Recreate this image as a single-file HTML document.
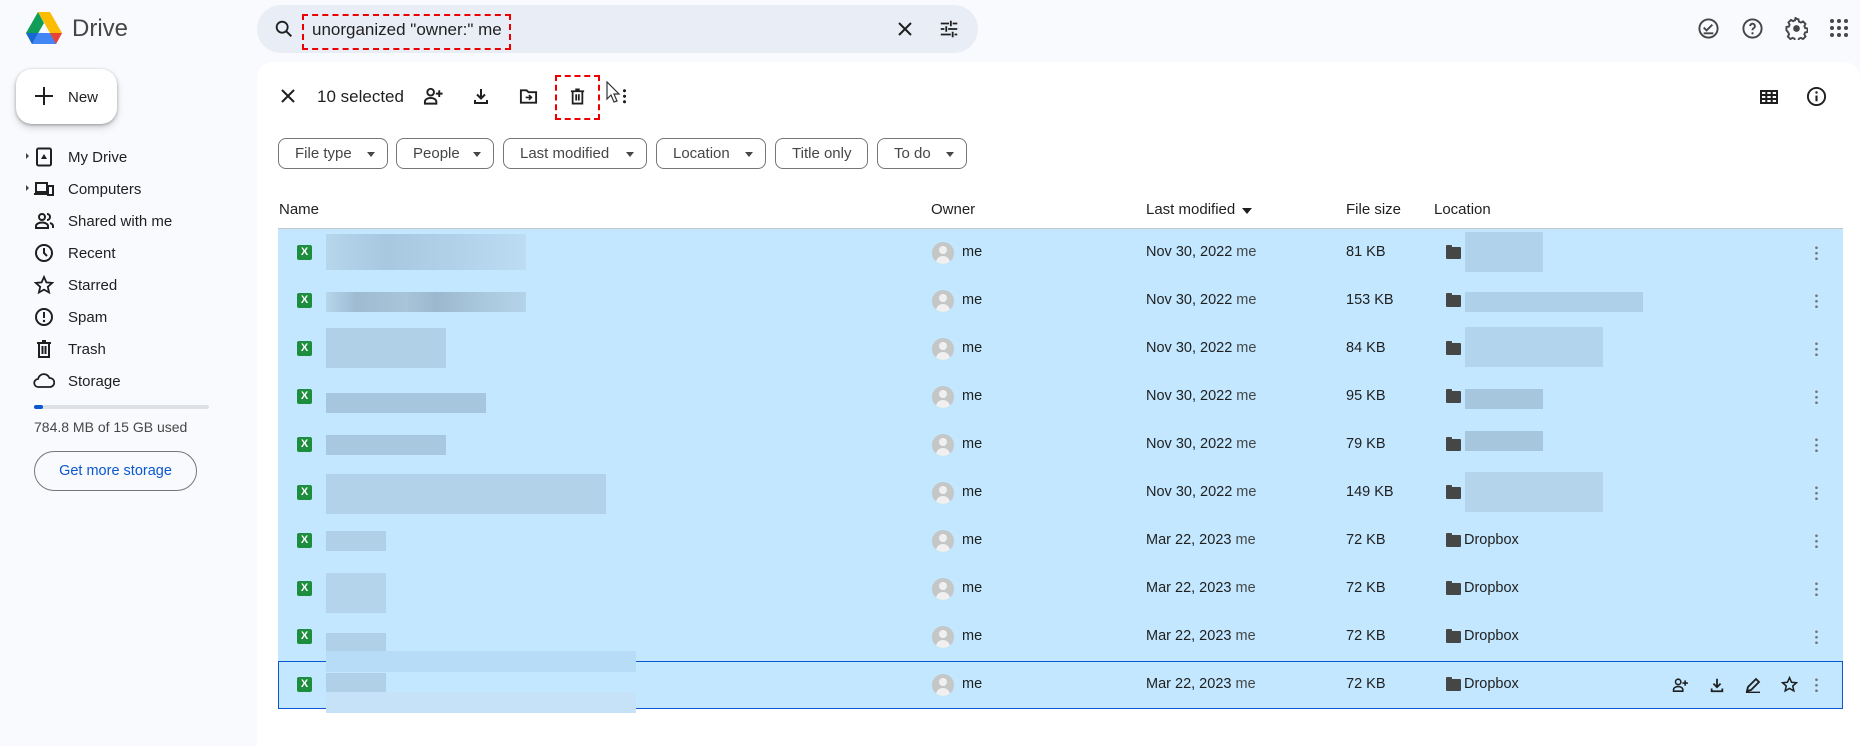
<!DOCTYPE html>
<html><head><meta charset="utf-8"><style>
*{margin:0;padding:0;box-sizing:border-box}
body{width:1860px;height:746px;background:#f8fafd;font-family:"Liberation Sans",Arial,sans-serif;color:#1f1f1f;position:relative;overflow:hidden}
.a{position:absolute}
.nav{position:absolute;left:68px;font-size:15px;color:#1f1f1f}
.ni{position:absolute;left:34px;width:20px;height:20px}
.chip{position:absolute;top:138px;height:31px;border:1px solid #747775;border-radius:8px;font-size:15px;color:#444746;padding:6px 0 0 16px}
.chip .c{position:absolute;right:12px;top:13px;border-left:4px solid transparent;border-right:4px solid transparent;border-top:5px solid #444746}
.hd{position:absolute;top:201px;font-size:15px;color:#1f1f1f}
.row{position:absolute;left:278px;width:1565px;height:48px;background:#c2e7ff}
.row span{position:absolute;top:15px;font-size:14.5px;color:#1f1f1f}
.xl{position:absolute;left:19px;top:16px;width:15px;height:15px;background:#1e8e3e;border-radius:2px;color:#fff;font-size:11px;font-weight:bold;text-align:center;line-height:15px}
.av{position:absolute;left:654px;top:13px;width:22px;height:22px;border-radius:50%;background:#c4c7c5;overflow:hidden}
.av:before{content:"";position:absolute;left:7px;top:4px;width:8px;height:8px;border-radius:50%;background:#f0f0f0}
.av:after{content:"";position:absolute;left:4px;top:14px;width:14px;height:10px;border-radius:7px 7px 0 0;background:#f0f0f0}
.fd{position:absolute;left:1168px;top:18px;width:15px;height:12px;background:#444746;border-radius:1px}
.fd:before{content:"";position:absolute;left:0;top:-2px;width:6px;height:3px;background:#444746;border-radius:1px 1px 0 0}
.dots{position:absolute;left:1537px;top:16px;width:3px;height:16px;background:radial-gradient(circle,#777 1.2px,transparent 1.5px) 0 0/3px 5.5px}
.bl{position:absolute;background:#a9cbe3}
svg{position:absolute}
</style></head><body>

<svg style="left:26px;top:12px" width="36" height="32" viewBox="0 0 36 32">
<path d="M12 0h12l12 21H24z" fill="#fbbc04"/><path d="M12 0L0 21l6 11 12-21z" fill="#0f9d58"/><path d="M6 32h24l6-11H12z" fill="#4285f4"/><path d="M24 21h12l-6 11z" fill="#ea4335"/><path d="M0 21h12L6 32z" fill="#1967d2"/>
</svg>
<div class="a" style="left:72px;top:15px;font-size:24px;color:#444746">Drive</div>

<div class="a" style="left:257px;top:5px;width:721px;height:48px;background:#e9eef6;border-radius:24px"></div>
<svg style="left:273px;top:18px" width="22" height="22" viewBox="0 0 24 24"><circle cx="10" cy="10" r="6" fill="none" stroke="#1f1f1f" stroke-width="2"/><path d="M14.5 14.5L20 20" stroke="#1f1f1f" stroke-width="2.2"/></svg>
<div class="a" style="left:302px;top:14px;width:209px;height:36px;border:2.5px dashed #e00"></div>
<div class="a" style="left:312px;top:20px;font-size:17px;color:#1f1f1f">unorganized "owner:" me</div>
<svg style="left:895px;top:19px" width="20" height="20" viewBox="0 0 20 20"><path d="M4 4l12 12M16 4L4 16" stroke="#1f1f1f" stroke-width="2"/></svg>
<svg style="left:938px;top:18px" width="22" height="22" viewBox="0 0 24 24"><path d="M3 6h9M16 6h5M3 12h4M11 12h10M3 18h11M18 18h3M14 3v6M9 9v6M16 15v6" stroke="#1f1f1f" stroke-width="2"/></svg>

<svg style="left:1697px;top:17px" width="23" height="23" viewBox="0 0 24 24"><circle cx="12" cy="12" r="9.5" fill="none" stroke="#444746" stroke-width="2"/><path d="M7 11l3 3 6-6M7 17h10" stroke="#444746" stroke-width="2" fill="none"/></svg>
<svg style="left:1741px;top:17px" width="23" height="23" viewBox="0 0 24 24"><circle cx="12" cy="12" r="9.5" fill="none" stroke="#444746" stroke-width="2"/><path d="M9.5 9.5a2.5 2.5 0 1 1 3.5 2.3c-.8.4-1 1-1 2" stroke="#444746" stroke-width="2" fill="none"/><circle cx="12" cy="17" r="1.2" fill="#444746"/></svg>
<svg style="left:1785px;top:17px" width="23" height="23" viewBox="0 0 24 24"><path d="M12 2l2 .3.5 2.5 2 1 2.3-1.2 2.6 2.6-1.2 2.3.8 2 2.5.5v3.6l-2.5.5-.8 2 1.2 2.3-2.6 2.6-2.3-1.2-2 .8-.5 2.5h-3.6l-.5-2.5-2-.8-2.3 1.2-2.6-2.6 1.2-2.3-.8-2L1.5 14v-3.6L4 10l.8-2L3.6 5.7l2.6-2.6 2.3 1.2 2-1L11 .8z" fill="none" stroke="#444746" stroke-width="2"/><circle cx="12" cy="12" r="3.5" fill="#444746"/></svg>
<svg style="left:1829px;top:18px" width="20" height="20" viewBox="0 0 20 20" fill="#444746"><circle cx="3" cy="3" r="2"/><circle cx="10" cy="3" r="2"/><circle cx="17" cy="3" r="2"/><circle cx="3" cy="10" r="2"/><circle cx="10" cy="10" r="2"/><circle cx="17" cy="10" r="2"/><circle cx="3" cy="17" r="2"/><circle cx="10" cy="17" r="2"/><circle cx="17" cy="17" r="2"/></svg>

<div class="a" style="left:16px;top:69px;width:101px;height:55px;background:#fff;border-radius:16px;box-shadow:0 1px 3px rgba(0,0,0,.3),0 4px 8px rgba(0,0,0,.15)"></div>
<svg style="left:34px;top:86px" width="20" height="20" viewBox="0 0 20 20"><path d="M10 1v18M1 10h18" stroke="#1f1f1f" stroke-width="2"/></svg>
<div class="a" style="left:68px;top:89px;font-size:15px">New</div>

<div class="a" style="left:26px;top:153px;border-top:3px solid transparent;border-bottom:3px solid transparent;border-left:3px solid #444"></div>
<div class="a" style="left:26px;top:185px;border-top:3px solid transparent;border-bottom:3px solid transparent;border-left:3px solid #444"></div>
<svg class="ni" style="top:147px" viewBox="0 0 20 20"><rect x="3" y="1.5" width="14" height="17" rx="1.5" fill="none" stroke="#1f1f1f" stroke-width="2"/><path d="M7 12h6l-3-5z" fill="#1f1f1f"/></svg>
<svg class="ni" style="top:179px" viewBox="0 0 20 20"><path d="M2 4h11v9H2zM0 15h13" stroke="#1f1f1f" stroke-width="2" fill="none"/><rect x="14" y="7" width="5" height="9" fill="none" stroke="#1f1f1f" stroke-width="2"/></svg>
<svg class="ni" style="top:211px" viewBox="0 0 20 20"><circle cx="8" cy="6" r="3" fill="none" stroke="#1f1f1f" stroke-width="2"/><path d="M2 17v-2c0-2 3-3.5 6-3.5s6 1.5 6 3.5v2z" fill="none" stroke="#1f1f1f" stroke-width="2"/><path d="M13 3a3 3 0 0 1 0 6M16 12c1.5.5 3 1.5 3 3v2" fill="none" stroke="#1f1f1f" stroke-width="2"/></svg>
<svg class="ni" style="top:243px" viewBox="0 0 20 20"><circle cx="10" cy="10" r="8" fill="none" stroke="#1f1f1f" stroke-width="2"/><path d="M10 5v5l3 3" fill="none" stroke="#1f1f1f" stroke-width="2"/></svg>
<svg class="ni" style="top:275px" viewBox="0 0 20 20"><path d="M10 2l2.4 5.4 5.8.5-4.4 3.9 1.3 5.7L10 14.6 4.9 17.5l1.3-5.7L1.8 7.9l5.8-.5z" fill="none" stroke="#1f1f1f" stroke-width="1.8"/></svg>
<svg class="ni" style="top:307px" viewBox="0 0 20 20"><circle cx="10" cy="10" r="8" fill="none" stroke="#1f1f1f" stroke-width="2"/><path d="M10 5v6" stroke="#1f1f1f" stroke-width="2"/><circle cx="10" cy="14" r="1.2" fill="#1f1f1f"/></svg>
<svg class="ni" style="top:339px" viewBox="0 0 20 20"><path d="M3 4h14M8 2h4M5 4v14h10V4M8.5 7v8M11.5 7v8" fill="none" stroke="#1f1f1f" stroke-width="2"/></svg>
<svg class="ni" style="top:371px;width:22px;left:33px" viewBox="0 0 22 20"><path d="M5.5 16a4 4 0 0 1-.5-8A6 6 0 0 1 16.5 7a4.5 4.5 0 0 1 .5 9z" fill="none" stroke="#1f1f1f" stroke-width="1.8"/></svg>
<div class="nav" style="top:149px">My Drive</div>
<div class="nav" style="top:181px">Computers</div>
<div class="nav" style="top:213px">Shared with me</div>
<div class="nav" style="top:245px">Recent</div>
<div class="nav" style="top:277px">Starred</div>
<div class="nav" style="top:309px">Spam</div>
<div class="nav" style="top:341px">Trash</div>
<div class="nav" style="top:373px">Storage</div>
<div class="a" style="left:34px;top:405px;width:175px;height:4px;background:#dde1e6;border-radius:2px"></div>
<div class="a" style="left:34px;top:405px;width:9px;height:4px;background:#0b57d0;border-radius:2px"></div>
<div class="a" style="left:34px;top:419px;font-size:14px;color:#444746">784.8 MB of 15 GB used</div>
<div class="a" style="left:34px;top:451px;width:163px;height:40px;border:1px solid #747775;border-radius:20px;color:#0b57d0;font-size:14.5px;text-align:center;line-height:38px">Get more storage</div>

<div class="a" style="left:257px;top:62px;width:1603px;height:684px;background:#fff;border-radius:16px 16px 0 0"></div>

<svg style="left:280px;top:88px" width="16" height="16" viewBox="0 0 16 16"><path d="M2 2l12 12M14 2L2 14" stroke="#1f1f1f" stroke-width="2"/></svg>
<div class="a" style="left:317px;top:87px;font-size:17px">10 selected</div>
<svg style="left:423px;top:86px" width="21" height="20" viewBox="0 0 22 20"><circle cx="8" cy="6" r="3.5" fill="none" stroke="#1f1f1f" stroke-width="2"/><path d="M2 18v-2c0-2.5 3-4 6-4s6 1.5 6 4v2z" fill="none" stroke="#1f1f1f" stroke-width="2"/><path d="M17 4v7M13.5 7.5h7" stroke="#1f1f1f" stroke-width="2"/></svg>
<svg style="left:472px;top:87px" width="18" height="18" viewBox="0 0 18 18"><path d="M9 2v9M5 7.5l4 4 4-4M3 13v3h12v-3" fill="none" stroke="#1f1f1f" stroke-width="2"/></svg>
<svg style="left:519px;top:87px" width="19" height="18" viewBox="0 0 20 18"><path d="M2 3h6l2 2h8v11H2z" fill="none" stroke="#1f1f1f" stroke-width="2"/><path d="M7 10.5h6M10.5 8l2.5 2.5-2.5 2.5" fill="none" stroke="#1f1f1f" stroke-width="1.8"/></svg>
<div class="a" style="left:555px;top:75px;width:45px;height:45px;border:2.5px dashed #e00"></div>
<svg style="left:570px;top:88px" width="15" height="17" viewBox="0 0 17 19"><path d="M1 3.5h15M6 1.5h5M3 3.5v14h11v-14M7 7v7M10 7v7" fill="none" stroke="#1f1f1f" stroke-width="2"/></svg>
<svg style="left:606px;top:81px" width="14" height="22" viewBox="0 0 14 22"><path d="M1 1v17l4-4 3 7 3-1-3-7h5z" fill="#fff" stroke="#333" stroke-width="1.2"/></svg>
<div class="a" style="left:623px;top:88px;width:3px;height:16px;background:radial-gradient(circle,#1f1f1f 1.4px,transparent 1.7px) 0 0/3px 5.5px"></div>
<svg style="left:1760px;top:90px" width="18" height="14" viewBox="0 0 18 14"><path d="M1 1h16v12H1zM1 5h16M1 9h16M6.3 1v12M11.7 1v12" fill="none" stroke="#1f1f1f" stroke-width="2"/></svg>
<svg style="left:1806px;top:86px" width="21" height="21" viewBox="0 0 22 22"><circle cx="11" cy="11" r="9" fill="none" stroke="#1f1f1f" stroke-width="2"/><path d="M11 10v6" stroke="#1f1f1f" stroke-width="2.2"/><circle cx="11" cy="6.8" r="1.3" fill="#1f1f1f"/></svg>

<div class="chip" style="left:278px;width:110px">File type<i class="c"></i></div>
<div class="chip" style="left:396px;width:98px">People<i class="c"></i></div>
<div class="chip" style="left:503px;width:144px">Last modified<i class="c"></i></div>
<div class="chip" style="left:656px;width:110px">Location<i class="c"></i></div>
<div class="chip" style="left:775px;width:93px">Title only</div>
<div class="chip" style="left:877px;width:90px">To do<i class="c"></i></div>

<div class="hd" style="left:279px">Name</div>
<div class="hd" style="left:931px">Owner</div>
<div class="hd" style="left:1146px">Last modified</div>
<div class="a" style="left:1242px;top:208px;border-left:5px solid transparent;border-right:5px solid transparent;border-top:6px solid #1f1f1f"></div>
<div class="hd" style="left:1346px">File size</div>
<div class="hd" style="left:1434px">Location</div>
<div class="a" style="left:278px;top:228px;width:1565px;height:1px;background:#c4c7c5"></div>

<div class="row" style="top:229px"><div class="xl">X</div><div class="bl" style="left:48px;top:5px;width:200px;height:36px;background:linear-gradient(90deg,#b6d6ec,#a8c8e0 30%,#b0d0e8 60%,#bcdcf2)"></div><div class="av"></div><span style="left:684px">me</span><span style="left:868px">Nov 30, 2022 <span style="position:static;color:#444746">me</span></span><span style="left:1068px">81 KB</span><div class="fd"></div><div class="bl" style="left:1187px;top:3px;width:78px;height:40px;background:#b0d2ea"></div><div class="dots"></div></div>
<div class="row" style="top:277px"><div class="xl">X</div><div class="bl" style="left:48px;top:15px;width:200px;height:20px;background:linear-gradient(90deg,#b6d6ec,#9ebbd2 15%,#a8c4d8 40%,#9cb8cf 55%,#aac8de 80%,#b4d2e8)"></div><div class="av"></div><span style="left:684px">me</span><span style="left:868px">Nov 30, 2022 <span style="position:static;color:#444746">me</span></span><span style="left:1068px">153 KB</span><div class="fd"></div><div class="bl" style="left:1187px;top:15px;width:178px;height:20px;background:#aed0e8"></div><div class="dots"></div></div>
<div class="row" style="top:325px"><div class="xl">X</div><div class="bl" style="left:48px;top:3px;width:120px;height:40px;background:#b0d0e8"></div><div class="av"></div><span style="left:684px">me</span><span style="left:868px">Nov 30, 2022 <span style="position:static;color:#444746">me</span></span><span style="left:1068px">84 KB</span><div class="fd"></div><div class="bl" style="left:1187px;top:2px;width:138px;height:40px;background:#b2d4ec"></div><div class="dots"></div></div>
<div class="row" style="top:373px"><div class="xl">X</div><div class="bl" style="left:48px;top:20px;width:160px;height:20px;background:#a6c6de"></div><div class="av"></div><span style="left:684px">me</span><span style="left:868px">Nov 30, 2022 <span style="position:static;color:#444746">me</span></span><span style="left:1068px">95 KB</span><div class="fd"></div><div class="bl" style="left:1187px;top:16px;width:78px;height:20px;background:#a6c6de"></div><div class="dots"></div></div>
<div class="row" style="top:421px"><div class="xl">X</div><div class="bl" style="left:48px;top:14px;width:120px;height:20px;background:#a8c8e0"></div><div class="av"></div><span style="left:684px">me</span><span style="left:868px">Nov 30, 2022 <span style="position:static;color:#444746">me</span></span><span style="left:1068px">79 KB</span><div class="fd"></div><div class="bl" style="left:1187px;top:10px;width:78px;height:20px;background:#a6c6de"></div><div class="dots"></div></div>
<div class="row" style="top:469px"><div class="xl">X</div><div class="bl" style="left:48px;top:5px;width:280px;height:40px;background:#b2d2ea"></div><div class="av"></div><span style="left:684px">me</span><span style="left:868px">Nov 30, 2022 <span style="position:static;color:#444746">me</span></span><span style="left:1068px">149 KB</span><div class="fd"></div><div class="bl" style="left:1187px;top:3px;width:138px;height:40px;background:#b4d4ec"></div><div class="dots"></div></div>
<div class="row" style="top:517px"><div class="xl">X</div><div class="bl" style="left:48px;top:14px;width:60px;height:20px;background:#b0d0e8"></div><div class="av"></div><span style="left:684px">me</span><span style="left:868px">Mar 22, 2023 <span style="position:static;color:#444746">me</span></span><span style="left:1068px">72 KB</span><div class="fd"></div><span style="left:1186px">Dropbox</span><div class="dots"></div></div>
<div class="row" style="top:565px"><div class="xl">X</div><div class="bl" style="left:48px;top:8px;width:60px;height:40px;background:#b4d4ec"></div><div class="av"></div><span style="left:684px">me</span><span style="left:868px">Mar 22, 2023 <span style="position:static;color:#444746">me</span></span><span style="left:1068px">72 KB</span><div class="fd"></div><span style="left:1186px">Dropbox</span><div class="dots"></div></div>
<div class="row" style="top:613px"><div class="xl">X</div><div class="bl" style="left:48px;top:20px;width:60px;height:20px;background:#b0d0e8"></div><div class="av"></div><span style="left:684px">me</span><span style="left:868px">Mar 22, 2023 <span style="position:static;color:#444746">me</span></span><span style="left:1068px">72 KB</span><div class="fd"></div><span style="left:1186px">Dropbox</span><div class="dots"></div></div>
<div class="row" style="top:661px;border:1px solid #0b57d0"><div class="xl" style="left:18px;top:15px">X</div><div class="bl" style="left:47px;top:11px;width:60px;height:20px;background:#b0d0e8"></div><div class="av" style="left:653px;top:12px"></div><span style="left:683px;top:14px">me</span><span style="left:867px;top:14px">Mar 22, 2023 <span style="position:static;color:#444746">me</span></span><span style="left:1067px;top:14px">72 KB</span><div class="fd" style="left:1167px;top:17px"></div><span style="left:1185px;top:14px">Dropbox</span>
<svg style="left:1393px;top:15px" width="17" height="16" viewBox="0 0 22 20"><circle cx="8" cy="6" r="3.5" fill="none" stroke="#1f1f1f" stroke-width="2"/><path d="M2 18v-2c0-2.5 3-4 6-4s6 1.5 6 4v2z" fill="none" stroke="#1f1f1f" stroke-width="2"/><path d="M17 4v7M13.5 7.5h7" stroke="#1f1f1f" stroke-width="2"/></svg>
<svg style="left:1430px;top:15px" width="16" height="16" viewBox="0 0 18 18"><path d="M9 2v9M5 7.5l4 4 4-4M3 13v3h12v-3" fill="none" stroke="#1f1f1f" stroke-width="2"/></svg>
<svg style="left:1466px;top:15px" width="16" height="16" viewBox="0 0 16 16"><path d="M2 14l1-4 8-8 3 3-8 8zM1 15.5h14" fill="none" stroke="#1f1f1f" stroke-width="1.8"/></svg>
<svg style="left:1502px;top:14px" width="17" height="17" viewBox="0 0 20 20"><path d="M10 2l2.4 5.4 5.8.5-4.4 3.9 1.3 5.7L10 14.6 4.9 17.5l1.3-5.7L1.8 7.9l5.8-.5z" fill="none" stroke="#1f1f1f" stroke-width="1.8"/></svg>
<div class="dots" style="left:1536px;top:15px"></div></div>
<div class="bl" style="left:326px;top:651px;width:310px;height:21px;background:#b6dcf8"></div>
<div class="bl" style="left:326px;top:692px;width:310px;height:21px;background:#c6e2f8"></div>
</body></html>
